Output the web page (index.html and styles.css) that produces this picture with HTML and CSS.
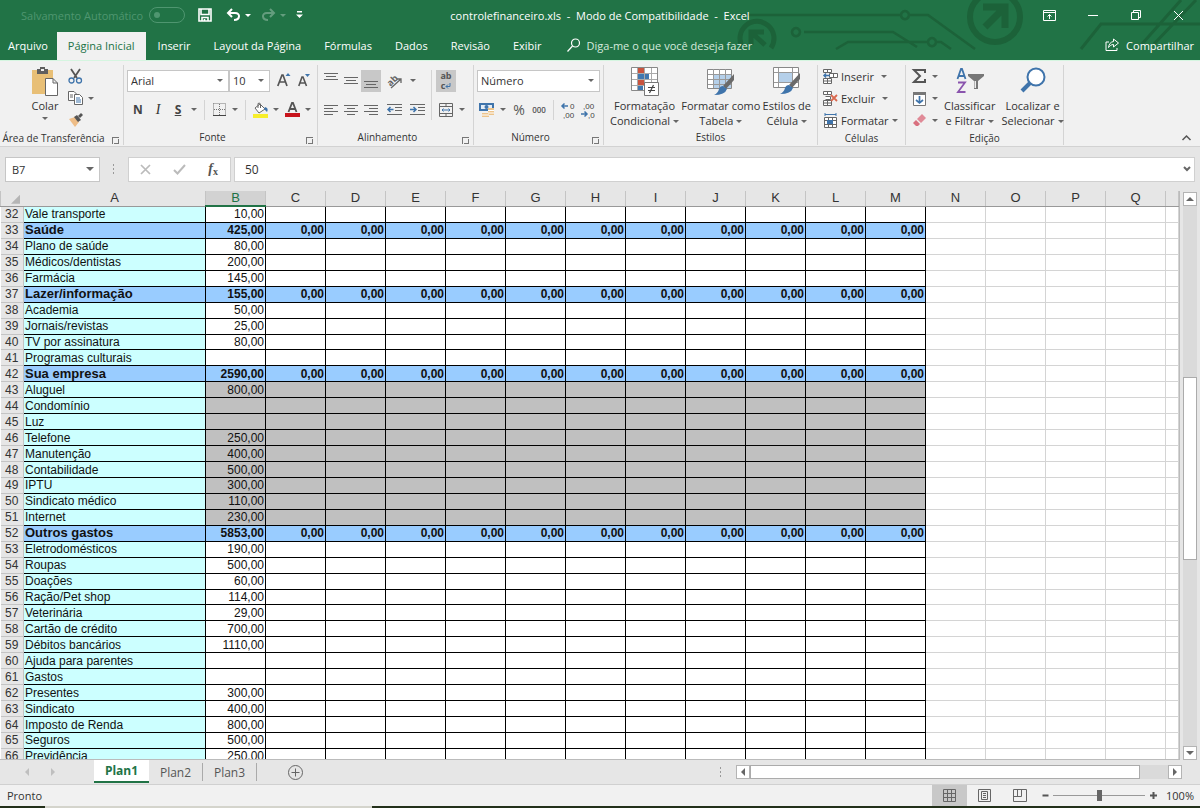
FILE: index.html
```html
<!DOCTYPE html>
<html lang="pt-BR">
<head>
<meta charset="utf-8">
<title>controlefinanceiro.xls - Excel</title>
<link rel="stylesheet" href="styles.css">
</head>
<body>
<header class="top">
  <svg class="circuit" width="460" height="60" viewBox="0 0 460 60" fill="none" stroke="#1c6239" stroke-width="3">
    <path d="M0 15H161M169 15H188L235 49M64 32H153L177 47M60 32a4 4 0 1 0 0 .1M169 15a4 4 0 1 0 0 .1M96 49L108 42H188M196 42H201L211 49M196 42a4 4 0 1 0 0 .1" stroke-width="2.6"/>
    <path d="M3 48A17 17 0 1 1 31 48" stroke-width="5"/>
    <path d="M11 45V32H24M12 33L25 45" stroke-width="5"/>
    <circle cx="255" cy="17" r="25" stroke-width="6"/>
    <path d="M243 7H265V28M264 8L245 27" stroke-width="7"/>
    <path d="M341 49L361 24H460M402 44L441 0M414 44L456 0" stroke-width="3"/>
  </svg>
  <div class="titlebar">
    <div class="quick">
      <label class="autosave">Salvamento Automático <input type="checkbox" disabled></label>
      <button class="tb save" aria-label="Salvar"><svg width="14" height="14" viewBox="0 0 14 14" fill="none" stroke="#fff" stroke-width="1.600"><path d="M1 1H13V13H1ZM3 1V6.500H11V1M4 13V9.500H10V13M6.500 11V13"/></svg></button>
      <button class="tb" aria-label="Desfazer"><svg width="15" height="14" viewBox="0 0 15 14" fill="none" stroke="#fff" stroke-width="2"><path d="M6 1L2 5L6 9M2 5H9C15 5 14 12 8 12"/></svg><i class="arrow"></i></button>
      <button class="tb faded" aria-label="Refazer"><svg width="15" height="14" viewBox="0 0 15 14" fill="none" stroke="#fff" stroke-width="2"><path d="M9 1L13 5L9 9M13 5H6C0 5 1 12 7 12"/></svg><i class="arrow"></i></button>
      <button class="tb" aria-label="Personalizar"><svg width="7" height="8" viewBox="0 0 7 8"><path d="M1 0H6V1.500H1ZM0 3.500H7L3.500 7Z" fill="#fff"/></svg></button>
    </div>
    <div class="doc">controlefinanceiro.xls&nbsp; -&nbsp; Modo de Compatibilidade&nbsp; -&nbsp; Excel</div>
    <div class="window">
      <button aria-label="Opções da faixa"><svg width="13" height="11" viewBox="0 0 13 11" fill="none" stroke="#fff"><path d="M.5 .5H12.500V10.500H.5ZM.5 2.500H12.500M6.500 9V4.500M4.500 6.500L6.500 4.500L8.500 6.500"/></svg></button>
      <button aria-label="Minimizar"><svg width="10" height="10" viewBox="0 0 10 10" stroke="#fff"><path d="M0 5.500H10"/></svg></button>
      <button aria-label="Restaurar"><svg width="10" height="10" viewBox="0 0 10 10" fill="none" stroke="#fff"><path d="M.5 2.500H7.500V9.500H.5ZM2.500 2.500V.5H9.500V7.500H7.500"/></svg></button>
      <button aria-label="Fechar"><svg width="11" height="11" viewBox="0 0 11 11" stroke="#fff"><path d="M1 1L10 10M10 1L1 10"/></svg></button>
    </div>
  </div>
  <nav class="tabs">
    <button>Arquivo</button><button class="on">Página Inicial</button><button>Inserir</button><button>Layout da Página</button><button>Fórmulas</button><button>Dados</button><button>Revisão</button><button>Exibir</button>
    <button class="tell"><svg width="14" height="14" viewBox="0 0 14 14" fill="none" stroke="#fff" stroke-width="1.200"><circle cx="8.500" cy="5" r="4"/><path d="M5.500 8L.5 13.500"/></svg>Diga-me o que você deseja fazer</button>
    <button class="share"><svg width="15" height="14" viewBox="0 0 15 14" fill="none" stroke="#fff"><path d="M4 4H1V12.500H12V10M8.500 1L13.500 5L8.500 9V6.500C6 6.500 5 8 3.500 9.500C4 6 5.500 4 8.500 3.500Z"/></svg>Compartilhar</button>
  </nav>
</header>

<section class="ribbon">
  <div class="group clip">
    <div class="body">
      <button class="big"><svg width="28" height="29" viewBox="0 0 28 29"><path d="M1 3H22V27H1Z" fill="#e8bf76"/><path d="M6 2H9V0H14V2H17V7H6Z" fill="#5f5f5f"/><path d="M10 2H13V4H10Z" fill="#f1f1f1"/><path d="M14.500 11.500H22L26.500 16V28.500H14.500ZM22 11.500V16H26.500" fill="#fff" stroke="#666"/></svg><span>Colar</span><i class="arrow"></i></button>
      <div class="col">
        <div class="row"><button class="b" aria-label="Recortar"><svg width="15" height="15" viewBox="0 0 15 15" fill="none"><path d="M3 0L9 9M12 0L6 9" stroke="#555" stroke-width="1.800"/><circle cx="3.500" cy="11.500" r="2.500" stroke="#3f74ab" stroke-width="1.300"/><circle cx="11" cy="11.500" r="2.500" stroke="#3f74ab" stroke-width="1.300"/></svg></button></div>
        <div class="row"><button class="b" aria-label="Copiar"><svg width="15" height="14" viewBox="0 0 15 14" fill="#fff" stroke="#666"><path d="M.5 .5H6L8.500 3V9.500H.5ZM2 4H5M2 6H5"/><path d="M6.500 3.500H11.500L14.500 6.500V13.500H6.500Z"/><path d="M8 7H12M8 9H13M8 11H13" stroke="#3f74ab"/></svg></button><button class="a" aria-label="Opções"><i class="arrow"></i></button></div>
        <div class="row"><button class="b" aria-label="Pincel"><svg width="15" height="14" viewBox="0 0 15 14"><path d="M1 6L7 4L11 9L7 14Z" fill="#eebd87"/><path d="M6 4L9 2L13 7L10 9Z" fill="#555"/><path d="M10 3L13 0L15 2L12 5Z" fill="#555"/></svg></button></div>
      </div>
    </div>
    <h2>Área de Transferência</h2><button class="launch" aria-label="Abrir"></button>
  </div>

  <div class="group font">
    <div class="body stack">
      <div class="row"><span class="combo grow"><select aria-label="Fonte"><option>Arial</option></select></span><span class="combo size"><select aria-label="Tamanho"><option>10</option></select></span>
        <button class="b glyph" aria-label="Aumentar"><svg width="14" height="14" viewBox="0 0 14 14"><path d="M.8 13L5 2H6L10 13M2.500 9H8.500" fill="none" stroke="#555" stroke-width="1.700"/><path d="M8.500 3L11 0L13.500 3Z" fill="#3f74ab"/></svg></button>
        <button class="b glyph" aria-label="Diminuir"><svg width="13" height="14" viewBox="0 0 13 14"><path d="M.8 13L4 4H5L8.500 13M2 10H7" fill="none" stroke="#555" stroke-width="1.600"/><path d="M7 1H12L9.500 4Z" fill="#3f74ab"/></svg></button></div>
      <div class="row pad"><button class="b"><b>N</b></button><button class="b serif"><em>I</em></button><button class="b"><b><u>S</u></b></button><button class="a" aria-label="Opções"><i class="arrow"></i></button><i class="sep"></i>
        <button class="b" aria-label="Bordas"><svg width="13" height="13" viewBox="0 0 13 13" stroke="#777" fill="none"><path d="M.5 .5H12.500V12M.5 .5V12M6.500 1V12M1 6.500H12" stroke-dasharray="1 1"/><path d="M0 12.500H13" stroke="#444"/></svg></button><button class="a" aria-label="Opções"><i class="arrow"></i></button><i class="sep"></i>
        <button class="b" aria-label="Preenchimento"><svg width="17" height="16" viewBox="0 0 17 16"><path d="M3 6L8 2L13 7L7 11Z" fill="#fff" stroke="#666"/><path d="M6 6V1.500Q8 0 8.500 2.500V6" fill="none" stroke="#666"/><path d="M13 5Q17 6 15 10L12 7Z" fill="#3f74ab"/><path d="M1 12H16V16H1Z" fill="#f7ee2b"/></svg></button><button class="a" aria-label="Opções"><i class="arrow"></i></button>
        <button class="b" aria-label="Cor da fonte"><svg width="15" height="15" viewBox="0 0 15 15"><path d="M3.500 10L7 1H8L11.500 10M5 7H10" fill="none" stroke="#555" stroke-width="1.800"/><path d="M0 11H15V15H0Z" fill="#c8141c"/></svg></button><button class="a" aria-label="Opções"><i class="arrow"></i></button></div>
    </div>
    <h2>Fonte</h2><button class="launch" aria-label="Abrir"></button>
  </div>

  <div class="group align">
    <div class="body">
      <div class="stack">
        <div class="row"><button class="b" aria-label="Superior"><svg width="14" height="16" viewBox="0 0 14 16" stroke="#666"><path d="M0 .5H14M2 3.500H12M0 6.500H14"/></svg></button><button class="b" aria-label="Meio"><svg width="14" height="16" viewBox="0 0 14 16" stroke="#666"><path d="M0 4.500H14M2 7.500H12M0 10.500H14"/></svg></button><button class="b on" aria-label="Inferior"><svg width="14" height="16" viewBox="0 0 14 16" stroke="#666"><path d="M0 8.500H14M2 11.500H12M0 14.500H14"/></svg></button>
          <button class="b wide" aria-label="Orientação"><svg width="17" height="16" viewBox="0 0 17 16"><text x="1" y="11" class="tilt" transform="rotate(-45 6 8)">ab</text><path d="M5 15L15 6M11 6H15V10" fill="none" stroke="#666" stroke-width="1.300"/></svg></button><button class="a" aria-label="Opções"><i class="arrow"></i></button></div>
        <div class="row"><button class="b" aria-label="Esquerda"><svg width="14" height="12" viewBox="0 0 14 12" stroke="#666"><path d="M0 1.500H14M0 4.500H9M0 7.500H14M0 10.500H9"/></svg></button><button class="b" aria-label="Centro"><svg width="14" height="12" viewBox="0 0 14 12" stroke="#666"><path d="M0 1.500H14M3 4.500H11M0 7.500H14M3 10.500H11"/></svg></button><button class="b" aria-label="Direita"><svg width="14" height="12" viewBox="0 0 14 12" stroke="#666"><path d="M0 1.500H14M5 4.500H14M0 7.500H14M5 10.500H14"/></svg></button>
          <button class="b wide" aria-label="Diminuir recuo"><svg width="15" height="12" viewBox="0 0 15 12" stroke="#666"><path d="M0 .5H15M8 3.500H15M8 6.500H15M0 10.500H15"/><path d="M6.500 5.500H1M3.500 3L1 5.500L3.500 8" fill="none" stroke="#3f74ab" stroke-width="1.500"/></svg></button><button class="b" aria-label="Aumentar recuo"><svg width="15" height="12" viewBox="0 0 15 12" stroke="#666"><path d="M0 .5H15M8 3.500H15M8 6.500H15M0 10.500H15"/><path d="M0 5.500H6M3.500 3L6 5.500L3.500 8" fill="none" stroke="#3f74ab" stroke-width="1.500"/></svg></button></div>
      </div>
      <i class="sep tall"></i>
      <div class="stack">
        <div class="row"><button class="b on wrap" aria-label="Quebrar texto"><span>ab</span><span>c<svg width="6" height="6" viewBox="0 0 6 6" fill="none" stroke="#3f74ab"><path d="M5 0V3.500H1M3 1.500L1 3.500L3 5.500"/></svg></span></button></div>
        <div class="row"><button class="b" aria-label="Mesclar"><svg width="14" height="14" viewBox="0 0 14 14" fill="none" stroke="#666"><path d="M.5 .5H13.500V13.500H.5ZM.5 3.500H13.500M.5 10.500H13.500M7 .5V3.500M7 10.500V13.500"/><path d="M3 7H11M4.500 5.500L3 7L4.500 8.500M9.500 5.500L11 7L9.500 8.500" stroke="#3f74ab"/></svg></button><button class="a" aria-label="Opções"><i class="arrow"></i></button></div>
      </div>
    </div>
    <h2>Alinhamento</h2><button class="launch" aria-label="Abrir"></button>
  </div>

  <div class="group number">
    <div class="body stack">
      <div class="row"><span class="combo grow"><select aria-label="Formato"><option>Número</option></select></span></div>
      <div class="row"><button class="b" aria-label="Moeda"><svg width="16" height="16" viewBox="0 0 16 16"><path d="M0 1H15V9H0Z" fill="#3f74ab"/><path d="M2 3H13V7H2Z" fill="#e4edf6"/><circle cx="7.500" cy="5" r="2" fill="#3f74ab"/><path d="M9 6H15V13H9ZM3 11H10V15H3Z" fill="#edc48b"/><path d="M9 8.500H15M9 11H15M3 13H10" stroke="#fff"/></svg></button><button class="a" aria-label="Opções"><i class="arrow"></i></button><button class="b pct">%</button><button class="b mil">000</button><i class="sep"></i>
        <button class="b dec" aria-label="Aumentar casas"><svg width="15" height="18" viewBox="0 0 15 18"><path d="M1 5H7M3.500 2.500L1 5L3.500 7.500" fill="none" stroke="#3f74ab" stroke-width="1.500"/><text x="9" y="8">0</text><text x="2" y="17">,00</text></svg></button><button class="b dec" aria-label="Diminuir casas"><svg width="15" height="18" viewBox="0 0 15 18"><text x="2" y="8">,00</text><path d="M0 13H6M3.500 10.500L6 13L3.500 15.500" fill="none" stroke="#3f74ab" stroke-width="1.500"/><text x="7" y="17">,0</text></svg></button></div>
    </div>
    <h2>Número</h2><button class="launch" aria-label="Abrir"></button>
  </div>

  <div class="group styles">
    <div class="body">
      <button class="big"><svg width="28" height="29" viewBox="0 0 28 29"><path d="M.5 .5H26.500V23.500H.5Z" fill="#fff" stroke="#888"/><path d="M7 1H13V6H7ZM7 12H14V18H7Z" fill="#c9543f"/><path d="M7 6H18V12H7ZM7 18H12V23H7Z" fill="#4178b0"/><path d="M6.500 1V23M13.500 1V23M20.500 1V23M1 6.500H26M1 12.500H26M1 18.500H26" stroke="#aaa"/><path d="M13.500 15.500H27.500V28.500H13.500Z" fill="#fff" stroke="#777"/><path d="M17 20.500H24M17 23.500H24M22.500 18L18.500 26" stroke="#444" stroke-width="1.200"/></svg><span>Formatação<br>Condicional<i class="arrow"></i></span></button>
      <button class="big"><svg width="28" height="29" viewBox="0 0 28 29"><path d="M.5 2.500H24.500V21.500H.5Z" fill="#fff" stroke="#888"/><path d="M7 8H24V21H7Z" fill="#b5d0ea"/><path d="M6.500 2V21M12.500 2V21M18.500 2V21M1 7.500H24M1 12.500H24M1 17.500H24" stroke="#999"/><path d="M27 7V13L19 22L16 19Z" fill="#6a6a6a"/><path d="M16 19L20 22Q18 28 7 28Q11 26 12 22Q13 19 16 19Z" fill="#3f74ab"/></svg><span>Formatar como<br>Tabela<i class="arrow"></i></span></button>
      <button class="big"><svg width="28" height="29" viewBox="0 0 28 29"><path d="M.5 .5H25.500V20.500H.5Z" fill="#fff" stroke="#888"/><path d="M6 6H20V15H6Z" fill="#b5d0ea"/><path d="M5.500 1V20M19.500 1V20M1 5.500H25M1 15.500H25" stroke="#999"/><path d="M27 6V12L19 21L16 18Z" fill="#6a6a6a"/><path d="M16 18L20 21Q18 27 7 27Q11 25 12 21Q13 18 16 18Z" fill="#3f74ab"/></svg><span>Estilos de<br>Célula<i class="arrow"></i></span></button>
    </div>
    <h2>Estilos</h2>
  </div>

  <div class="group cells">
    <div class="body col">
      <button class="line"><svg width="15" height="15" viewBox="0 0 15 15" fill="#fff" stroke="#666"><path d="M.5 .5H8.500V3.500H.5ZM4.500 .5V3.500M6.500 4.500H14.500V8.500H6.500ZM10.500 4.500V8.500M.5 9.500H8.500V14.500H.5ZM4.500 9.500V14.500M.5 12H8.500"/><path d="M7 6.500H1M3 4.500L1 6.500L3 8.500" stroke="#3f74ab" stroke-width="1.500" fill="none"/></svg>Inserir<i class="arrow far"></i></button>
      <button class="line"><svg width="15" height="15" viewBox="0 0 15 15" fill="#fff" stroke="#666"><path d="M.5 .5H8.500V3.500H.5ZM4.500 .5V3.500M2.500 5.500H7.500V8.500H2.500M.5 9.500H8.500V14.500H.5ZM4.500 9.500V14.500M.5 12H8.500"/><path d="M8 4L14 10M14 4L8 10" stroke="#d9694f" stroke-width="1.800"/></svg>Excluir<i class="arrow far"></i></button>
      <button class="line"><svg width="15" height="15" viewBox="0 0 15 15" fill="#fff" stroke="#666"><path d="M1.500 4.500H13.500V14.500H1.500ZM5.500 4.500V14.500M9.500 4.500V14.500M1.500 7.500H13.500M1.500 11.500H13.500"/><path d="M4 7H10V11H4Z" fill="#3f74ab" stroke="none"/><path d="M2 1.500H13M2 0V3M13 0V3" stroke="#3f74ab"/></svg>Formatar<i class="arrow"></i></button>
    </div>
    <h2>Células</h2>
  </div>

  <div class="group edit">
    <div class="body">
      <div class="col">
        <div class="row"><button class="b" aria-label="Soma"><svg width="15" height="14" viewBox="0 0 15 14" fill="none" stroke="#555" stroke-width="2"><path d="M13 4V1H2L8 7L2 13H13V10"/></svg></button><button class="a" aria-label="Opções"><i class="arrow"></i></button></div>
        <div class="row"><button class="b" aria-label="Preencher"><svg width="13" height="15" viewBox="0 0 13 15"><path d="M.5 1.500H12.500V14.500H.5Z" fill="#fff" stroke="#777"/><path d="M0 1H13V4H0Z" fill="#777"/><path d="M6.500 5V12M3 9L6.500 12L10 9" fill="none" stroke="#3f74ab" stroke-width="1.700"/></svg></button><button class="a" aria-label="Opções"><i class="arrow"></i></button></div>
        <div class="row"><button class="b" aria-label="Limpar"><svg width="13" height="12" viewBox="0 0 13 12"><path d="M4 5L9 0L13 4L8 9Z" fill="#e08a97"/><path d="M3 6L7 10L5 12H3L0 9Z" fill="#d9707f"/></svg></button><button class="a" aria-label="Opções"><i class="arrow"></i></button></div>
      </div>
      <button class="big"><svg width="28" height="29" viewBox="0 0 28 29" fill="none"><path d="M1.500 12L5 2H6L9.500 12M3 9H8" stroke="#3f74ab" stroke-width="1.800"/><path d="M2 15.500H9L2 25H9.500" stroke="#8a54ad" stroke-width="1.800"/><path d="M12 7H28V9L22 14V22H18V14L12 9Z" fill="#777"/><path d="M18.500 14H20V21H18.500Z" fill="#eee"/></svg><span>Classificar<br>e Filtrar<i class="arrow"></i></span></button>
      <button class="big"><svg width="28" height="29" viewBox="0 0 28 29"><circle cx="17" cy="10" r="8.500" fill="#fff" stroke="#3f74ab" stroke-width="2"/><path d="M11 16L3 24" stroke="#3f74ab" stroke-width="4"/></svg><span>Localizar e<br>Selecionar<i class="arrow"></i></span></button>
    </div>
    <h2>Edição</h2>
  </div>
  <button class="collapse" aria-label="Recolher"><svg width="9" height="6" viewBox="0 0 9 6" fill="none" stroke="#555" stroke-width="1.500"><path d="M.5 5L4.500 1L8.500 5"/></svg></button>
</section>

<section class="formula">
  <span class="combo name"><input aria-label="Caixa de nome" value="B7"></span>
  <i class="dots"></i>
  <div class="fx">
    <button aria-label="Cancelar"><svg width="11" height="11" viewBox="0 0 11 11" stroke="#bbb" stroke-width="1.700"><path d="M1 1L10 10M10 1L1 10"/></svg></button>
    <button aria-label="Inserir"><svg width="13" height="11" viewBox="0 0 13 11" fill="none" stroke="#bbb" stroke-width="2"><path d="M1 6L4.500 9.500L12 1"/></svg></button>
    <button class="fn"><em>f</em><small>x</small></button>
  </div>
  <div class="entry"><input aria-label="Barra de fórmulas" value="50"><svg width="8" height="6" viewBox="0 0 8 6" fill="none" stroke="#666" stroke-width="2"><path d="M1 1L4 4L7 1"/></svg></div>
</section>

<main class="sheet">
  <div class="pane">
    <table>
      <colgroup id="cols"></colgroup>
      <thead><tr id="head"></tr></thead>
      <tbody id="rows"></tbody>
    </table>
  </div>
  <div class="vscroll">
    <button aria-label="Para cima"><i class="arrow up"></i></button>
    <div class="track"><div class="thumb"></div></div>
    <button aria-label="Para baixo"><i class="arrow down"></i></button>
  </div>
</main>

<div class="sheets">
  <button class="nav" aria-label="Planilha anterior"><i class="arrow left"></i></button><button class="nav" aria-label="Próxima planilha"><i class="arrow right"></i></button>
  <div class="names"><button class="on">Plan1</button><button>Plan2</button><button>Plan3</button></div>
  <button class="add" aria-label="Nova planilha"><svg width="15" height="15" viewBox="0 0 15 15" fill="none" stroke="#666"><circle cx="7.500" cy="7.500" r="7"/><path d="M3.500 7.500H11.500M7.500 3.500V11.500"/></svg></button>
  <i class="dots"></i>
  <div class="hscroll"><button aria-label="Esquerda"><i class="arrow left"></i></button><div class="track"><div class="thumb"></div></div><button aria-label="Direita"><i class="arrow right"></i></button></div>
</div>

<footer class="status">
  <span class="ready">Pronto</span>
  <button class="view on" aria-label="Normal"><svg width="13" height="13" viewBox="0 0 13 13" fill="none" stroke="#666"><path d="M.5 .5H12.500V12.500H.5ZM4.500 .5V12.500M8.500 .5V12.500M.5 4.500H12.500M.5 8.500H12.500"/></svg></button>
  <button class="view" aria-label="Layout"><svg width="13" height="13" viewBox="0 0 13 13" fill="none" stroke="#666"><path d="M.5 .5H12.500V12.500H.5ZM3.500 2.500H9.500V10.500H3.500ZM5 4.500H8M5 6.500H8M5 8.500H8"/></svg></button>
  <button class="view" aria-label="Quebras"><svg width="14" height="13" viewBox="0 0 14 13" fill="none" stroke="#666"><path d="M.5 .5H13.500V12.500H.5ZM4.500 .5V7.500M8.500 .5V7.500M.5 7.500H8.500"/></svg></button>
  <button class="zoom" aria-label="Menos zoom"><svg width="7" height="7" viewBox="0 0 7 7" stroke="#555" stroke-width="2"><path d="M.5 3.500H6.500"/></svg></button>
  <input type="range" aria-label="Zoom" min="0" max="100" value="50">
  <button class="zoom" aria-label="Mais zoom"><svg width="7" height="7" viewBox="0 0 7 7" stroke="#555" stroke-width="2"><path d="M0 3.500H7M3.500 0V7"/></svg></button>
  <span class="percent">100%</span>
</footer>
<div class="edge"><i></i><i></i></div>
<script src="sheet.js"></script>
</body>
</html>
```
FILE: styles.css
```css
* { box-sizing: border-box; }
body {
  margin: 0;
  height: 100vh;
  display: flex;
  flex-direction: column;
  overflow: hidden;
  background: #e6e6e6;
  color: #333;
  font: 11px/15px "Open Sans", sans-serif;
}
button, input, select { font: inherit; color: inherit; border: 0; padding: 0; margin: 0; background: none; }
button { display: flex; align-items: center; justify-content: center; white-space: nowrap; }
svg { display: block; flex: none; overflow: visible; }
h2 { margin: 0; font: inherit; }

.arrow { display: inline-block; flex: none; border: 3px solid transparent; border-top-color: #666; border-bottom: 0; vertical-align: middle; }
.arrow.up { border: 4px solid transparent; border-bottom-color: #666; border-top: 0; }
.arrow.down { border: 4px solid transparent; border-top-color: #666; border-bottom: 0; }
.arrow.left { border: 4px solid transparent; border-right-color: #666; border-left: 0; }
.arrow.right { border: 4px solid transparent; border-left-color: #666; border-right: 0; }

/* title bar and tabs */
.top { position: relative; flex: none; background: #217346; color: #fff; }
.circuit { position: absolute; top: 0; right: 0; }
.titlebar { position: relative; height: 32px; padding-bottom: 2px; display: grid; grid-template-columns: 1fr auto 1fr; align-items: center; }
.quick { display: flex; align-items: center; gap: 10px; padding-left: 21px; }
.autosave { display: flex; align-items: center; gap: 6px; color: #4f9670; }
.autosave input { appearance: none; width: 36px; height: 16px; border: 1px solid #4f9670; border-radius: 8px; display: flex; align-items: center; padding: 0 4px; }
.autosave input::before { content: ""; width: 6px; height: 6px; border-radius: 50%; background: #4f9670; }
.tb { gap: 4px; }
.save { margin: 0 4px 0 3px; }
.tb .arrow { border-top-color: #fff; }
.faded { opacity: .3; }
.window { display: flex; justify-content: flex-end; }
.window button { width: 43px; height: 28px; }
.tabs { position: relative; display: flex; height: 28px; }
.tabs button { padding: 0 11px 2px 12px; }
.tabs button:first-child { padding: 0 9px 2px 8px; }
.tabs .on { background: #f1f1f1; color: #217346; padding: 0 11px 2px; }
.tabs .tell { gap: 6px; color: #d5eadd; padding-left: 14px; }
.tabs .share { gap: 6px; margin-left: auto; padding: 0 6px 2px; }

/* ribbon */
.ribbon { flex: none; display: flex; height: 87px; padding-top: 4px; background: #f1f1f1; border-top: 1px solid #d5f5e0; border-bottom: 1px solid #d2d2d2; }
.group { position: relative; flex: none; display: flex; flex-direction: column; height: 80px; border-right: 1px solid #d4d4d4; }
.body { display: flex; height: 67px; padding: 0 3px; }
.group h2 { text-align: center; height: 15px; font-size: 10px; white-space: nowrap; }
.launch { position: absolute; right: 4px; bottom: 1px; width: 7px; height: 7px; border-top: 1px solid #777; border-left: 1px solid #777; }
.launch::after { content: ""; width: 4px; height: 4px; border-right: 1px solid #777; border-bottom: 1px solid #777; }
.stack { display: flex; flex-direction: column; gap: 6px; padding-top: 4px; }
.row { display: flex; align-items: center; height: 23px; }
.col { display: flex; flex-direction: column; }
.col .row { height: 22px; }
.pad { padding-left: 1px; }
.b { width: 20px; height: 22px; flex: none; }
.b.wide { width: 26px; }
.b.on { background: #c8c8c8; }
.b b { font-size: 12px; color: #444; }
.a { width: 12px; height: 22px; flex: none; }
.sep { flex: none; width: 9px; height: 20px; background: linear-gradient(#d4d4d4, #d4d4d4) center / 1px 100% no-repeat; }
.sep.tall { height: 50px; margin-top: 5px; }
.serif { font: 14px "Liberation Serif", serif; }
.big { flex-direction: column; justify-content: flex-start; padding-top: 2px; }
.big .arrow { margin: 0 0 1px 3px; }
.big > .arrow { margin: 4px 0 0; }
.big span { margin-top: 2px; }
.combo { position: relative; display: flex; height: 22px; background: #fff; border: 1px solid #c6c6c6; }
.combo::after { content: ""; position: absolute; right: 5px; top: 8px; border: 3px solid transparent; border-top-color: #666; border-bottom: 0; }
.combo select, .combo input { appearance: none; width: 100%; padding: 0 3px; }
.grow { flex: 1; }
.size { width: 41px; margin-right: 4px; }
.clip { width: 124px; }
.clip h2 { padding-right: 16px; }
.clip .body { padding-left: 28px; }
.clip .big { width: 34px; }
.clip .col { padding-left: 3px; }
.font { width: 194px; }
.font h2, .align h2, .number h2 { padding-right: 16px; }
.glyph svg { margin-bottom: 2px; }
.align { width: 156px; }
.tilt { font: bold 9px "Open Sans", sans-serif; fill: #666; }
.wrap { flex-direction: column; color: #555; font-weight: bold; font-size: 9px; line-height: 10px; }
.wrap span { display: flex; align-items: center; }
.number { width: 130px; }
.pct { font-size: 14px; color: #555; }
.mil { font-size: 8px; font-weight: 600; color: #555; }
.dec text { font: 8px "Liberation Sans", sans-serif; fill: #444; }
.styles { width: 214px; }
.styles .body { justify-content: space-between; padding: 0 6px; }
.cells { width: 88px; }
.cells .body { padding-left: 5px; }
.line { gap: 3px; height: 22px; justify-content: flex-start; }
.line .far { margin-left: 4px; }
.edit { width: 158px; }
.edit .big:nth-of-type(1) { margin-left: 3px; }
.edit .big:nth-of-type(2) { margin-left: 6px; }
.collapse { margin: auto 9px 5px auto; }

/* formula bar */
.formula { flex: none; display: flex; align-items: center; height: 44px; padding: 0 5px; }
.formula > * { height: 25px; }
.combo.name { width: 95px; }
.combo.name::after { border-width: 4px 4px 0; top: 9px; }
.combo.name input, .entry input { padding: 0 6px; }
.entry input { font-size: 12px; }
.dots { width: 3px; background: radial-gradient(circle, #999 1px, transparent 1px) center / 3px 4px; }
.formula .dots { height: 12px; margin: 0 13px 0 12px; }
.fx { display: flex; width: 103px; background: #fff; border: 1px solid #d0d0d0; margin-right: 3px; }
.fx button { flex: 1; }
.fn { font: bold 14px "Liberation Serif", serif; color: #555; }
.fn small { font-size: 10px; padding-top: 4px; }
.entry { flex: 1; display: flex; align-items: center; background: #fff; border: 1px solid #d0d0d0; padding: 0 3px; }
.entry input { flex: 1; padding-left: 7px; }

/* worksheet */
.sheet { flex: 1; min-height: 0; display: flex; }
.pane { flex: 1; min-width: 0; overflow: hidden; background: #fff; border-right: 1px solid #bbb; border-bottom: 1px solid #bbb; }
table { width: 100%; height: 574px; table-layout: fixed; border-collapse: collapse; font: 12px/14px "Liberation Sans", Arial, sans-serif; color: #111; }
td, th { padding: 0 1px; border: 1px solid #d4d4d4; white-space: nowrap; overflow: hidden; font-weight: normal; }
th { background: #e6e6e6; color: #333; }
thead th { border-color: #e6e6e6 #c4c4c4 #999; border-top: 0; font-size: 13px; }
thead th.sel { background: #d2d2d2; color: #217346; border-bottom: 2px solid #217346; }
thead th.corner { border-right-color: #e6e6e6; }
.corner::after { content: ""; display: block; margin: 2px 2px 0 auto; width: 9px; height: 9px; background: #b5b5b5; clip-path: polygon(100% 0, 100% 100%, 0 100%); }
tbody th { border-left: 0; border-color: #c4c4c4; }
td.num { text-align: right; }
td.box { border-color: #000; }
td.item { background: #ccffff; border-left-color: #889; }
td.picked { background: #c0c0c0; }
tr.total td.box { background: #99ccff; font-weight: bold; }
tr.total td.item { font-size: 13px; }
.col-row { width: 23px; }
.col-item { width: 182px; }
.col-value { width: 60px; }

.vscroll { flex: none; width: 20px; display: flex; flex-direction: column; padding: 1px 3px 0; }
.vscroll button, .hscroll button { flex: none; width: 14px; height: 14px; background: #fff; border: 1px solid #b4b4b4; }
.track { flex: 1; display: flex; background: #dadada; }
.thumb { background: #fff; border: 1px solid #ababab; }
.vscroll .track { display: grid; grid-template-rows: 171fr 184fr 186fr; }
.vscroll .thumb { grid-row: 2; }

/* sheet tabs */
.sheets { flex: none; display: flex; align-items: center; height: 25px; border-bottom: 1px solid #d0d0d0; }
.nav { width: 26px; opacity: .3; }
.nav:first-child { margin-left: 14px; }
.names { display: flex; align-self: stretch; margin-left: 28px; color: #555; font-size: 12px; }
.names button { width: 54px; border-right: 1px solid #aaa; margin: 3px 0; }
.names .on { width: 55px; margin: 0 0 1px; background: #fff; color: #217346; font-weight: bold; border: 0; border-bottom: 2px solid #217346; }
.add { margin-left: 31px; }
.sheets .dots { height: 12px; margin: 0 14px 0 auto; }
.hscroll { display: flex; width: 446px; margin-right: 18px; }
.hscroll .thumb { flex: 1; margin-right: 28px; }

/* status bar */
.status { flex: none; display: flex; align-items: center; height: 21px; background: #f1f1f1; }
.ready { margin: 0 auto 0 7px; padding-bottom: 1px; }
.view { width: 35px; height: 21px; }
.view.on { background: #c8c8c8; }
.zoom { width: 16px; height: 20px; }
.status input { appearance: none; width: 92px; height: 12px; background: linear-gradient(#999, #999) center / 100% 1px no-repeat; }
.status input::-webkit-slider-thumb { appearance: none; width: 5px; height: 11px; background: #666; }
.percent { margin: 0 6px 0 5px; padding-bottom: 1px; }
.edge { flex: none; display: flex; justify-content: space-between; height: 2px; background: #d4d4cc; }
.edge i { width: 45px; background: #23301a; }
.edge i:last-child { width: 69%; }
```
FILE: sheet.js
```js
const items = [
  ["Vale transporte", "10,00"], ["Saúde", "425,00", true], ["Plano de saúde", "80,00"],
  ["Médicos/dentistas", "200,00"], ["Farmácia", "145,00"], ["Lazer/informação", "155,00", true],
  ["Academia", "50,00"], ["Jornais/revistas", "25,00"], ["TV por assinatura", "80,00"],
  ["Programas culturais", ""], ["Sua empresa", "2590,00", true], ["Aluguel", "800,00"],
  ["Condomínio", ""], ["Luz", ""], ["Telefone", "250,00"], ["Manutenção", "400,00"],
  ["Contabilidade", "500,00"], ["IPTU", "300,00"], ["Sindicato médico", "110,00"],
  ["Internet", "230,00"], ["Outros gastos", "5853,00", true], ["Eletrodomésticos", "190,00"],
  ["Roupas", "500,00"], ["Doações", "60,00"], ["Ração/Pet shop", "114,00"],
  ["Veterinária", "29,00"], ["Cartão de crédito", "700,00"], ["Débitos bancários", "1110,00"],
  ["Ajuda para parentes", ""], ["Gastos", ""], ["Presentes", "300,00"], ["Sindicato", "400,00"],
  ["Imposto de Renda", "800,00"], ["Seguros", "500,00"], ["Previdência", "250,00"]
];
const firstRow = 32;
const letters = [..."ABCDEFGHIJKLMNOPQ", ""];

document.getElementById("cols").innerHTML =
  '<col class="col-row"><col class="col-item">' + '<col class="col-value">'.repeat(16) + "<col>";

document.getElementById("head").innerHTML =
  '<th class="corner"></th>' +
  letters.map(l => `<th${l === "B" ? ' class="sel"' : ""}>${l}</th>`).join("");

document.getElementById("rows").innerHTML = items.map(([name, value, total], i) => {
  const row = firstRow + i;
  const picked = row >= 43 && row <= 51 ? " picked" : "";
  const months = `<td class="box num${picked}">${total ? "0,00" : ""}</td>`.repeat(11);
  return `<tr${total ? ' class="total"' : ""}><th>${row}</th><td class="box item">${name}</td>` +
    `<td class="box num${picked}">${value}</td>${months}${"<td></td>".repeat(5)}</tr>`;
}).join("");
```
